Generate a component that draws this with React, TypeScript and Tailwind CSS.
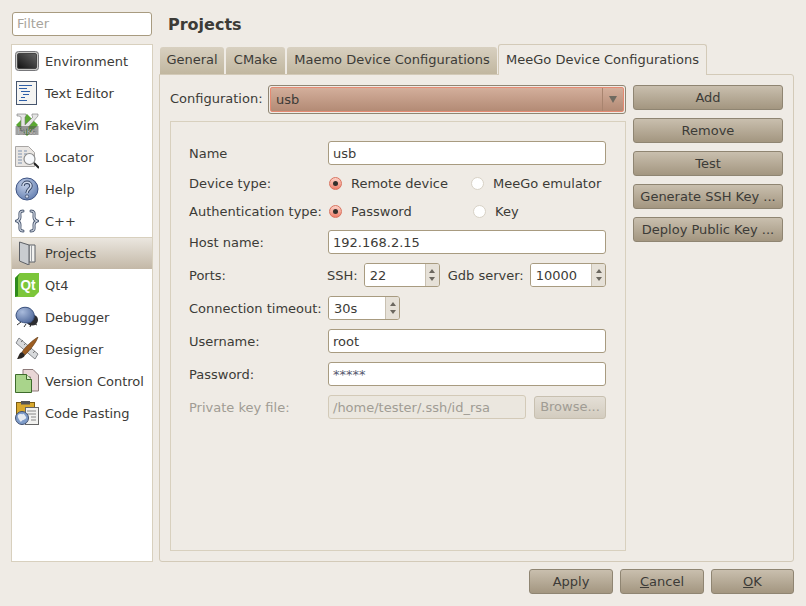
import type { ReactNode } from "react";

const EnvIcon = () => (
  <svg width="24" height="24" viewBox="0 0 24 24">
    <defs>
      <linearGradient id="envg" x1="0" y1="1" x2="1" y2="0">
        <stop offset="0" stopColor="#111" />
        <stop offset="1" stopColor="#666" />
      </linearGradient>
    </defs>
    <rect x="0.5" y="2.5" width="23" height="19" rx="3" fill="#c8c8c6" stroke="#77777a" />
    <rect x="2.5" y="4.5" width="19" height="15" rx="1.5" fill="url(#envg)" stroke="#444" />
  </svg>
);

const EditorIcon = () => (
  <svg width="24" height="24" viewBox="0 0 24 24">
    <rect x="1.5" y="0.5" width="20" height="23" fill="#f4f4f2" stroke="#47566e" />
    <path d="M4 4.5h13M4 7.5h8M6 10.500h9M8 13.500h6M6 16.500h4M4 19.500h8" stroke="#2f5fa8" strokeWidth="1" />
  </svg>
);

const FakeVimIcon = () => (
  <svg width="24" height="24" viewBox="0 0 24 24">
    <path d="M12 1 23 12 12 23 1 12Z" fill="#5aa832" />
    <path d="M2 1h9v2l-1 1v8l8-8-1-1V1h6v2L10 18H6V4L4 3H2Z" fill="#e4e4e4" stroke="#777" strokeWidth="0.6" />
    <rect x="0.5" y="13" width="23" height="9" fill="#555" opacity="0.55" />
    <text x="12" y="21" textAnchor="middle" fontFamily="'DejaVu Sans', sans-serif" fontSize="8.5" fill="#fff" stroke="#333" strokeWidth="0.25">Fake</text>
  </svg>
);

const LocatorIcon = () => (
  <svg width="24" height="24" viewBox="0 0 24 24">
    <path d="M0.5 1.5h13l6 6v14H0.5Z" fill="#e9e6e3" stroke="#a9a6a4" />
    <path d="M3 6h4M9 6h3M3 9h4M9 9h3M3 12h4M3 15h4M3 18h4" stroke="#7f93b0" strokeWidth="1" />
    <path d="M19 18l5 5" stroke="#222" strokeWidth="2" />
    <circle cx="14.5" cy="14" r="5.5" fill="#f6f8fb" stroke="#8b8b8b" strokeWidth="1.2" />
  </svg>
);

const HelpIcon = () => (
  <svg width="24" height="24" viewBox="0 0 24 24">
    <defs>
      <radialGradient id="helpg" cx="0.4" cy="0.3" r="0.8">
        <stop offset="0" stopColor="#c3d0e8" />
        <stop offset="1" stopColor="#5d79ad" />
      </radialGradient>
    </defs>
    <circle cx="12" cy="12" r="11" fill="url(#helpg)" stroke="#3f5484" />
    <path d="M8 9c0-5 8-5 8 0 0 3-4 3-4 7" fill="none" stroke="#31415f" strokeWidth="3.4" />
    <path d="M8 9c0-5 8-5 8 0 0 3-4 3-4 7" fill="none" stroke="#cfd9ec" strokeWidth="1.6" />
    <circle cx="12" cy="19.5" r="1.7" fill="#cfd9ec" stroke="#31415f" strokeWidth="0.7" />
  </svg>
);

const CppIcon = () => (
  <svg width="24" height="24" viewBox="0 0 24 24">
    <g fill="none" strokeLinecap="round">
      <path d="M8 2C4 2 5 5 5 8s-3 4-3 4 3 1 3 4-1 6 3 6" stroke="#4a5870" strokeWidth="3" />
      <path d="M16 2c4 0 3 3 3 6s3 4 3 4-3 1-3 4 1 6-3 6" stroke="#4a5870" strokeWidth="3" />
      <path d="M8 2C4 2 5 5 5 8s-3 4-3 4 3 1 3 4-1 6 3 6" stroke="#d5dbe6" strokeWidth="1.2" />
      <path d="M16 2c4 0 3 3 3 6s3 4 3 4-3 1-3 4 1 6-3 6" stroke="#d5dbe6" strokeWidth="1.2" />
    </g>
  </svg>
);

const ProjectsIcon = () => (
  <svg width="24" height="24" viewBox="0 0 24 24">
    <path d="M14 4h6v17h-6Z" fill="#f2f2f0" stroke="#5d6066" />
    <path d="M16.500 4v17" stroke="#9a9da2" />
    <path d="M4.500 1 14 4v20l-9.500-4Z" fill="#c9ccd0" stroke="#5d6066" />
  </svg>
);

const QtIcon = () => (
  <svg width="24" height="24" viewBox="0 0 24 24">
    <path d="M5 0h19v19l-5 5H0V5Z" fill="#7cc63a" />
    <path d="M5 0 0 5v19l3-1V4Z" fill="#2f8a1c" />
    <text x="13" y="17" textAnchor="middle" fontFamily="'Liberation Sans', sans-serif" fontSize="15" fontWeight="700" fill="#fff" textLength="15" lengthAdjust="spacingAndGlyphs">Qt</text>
  </svg>
);

const DebuggerIcon = () => (
  <svg width="24" height="24" viewBox="0 0 24 24">
    <defs>
      <radialGradient id="bugg" cx="0.35" cy="0.3" r="0.8">
        <stop offset="0" stopColor="#a9bbdc" />
        <stop offset="1" stopColor="#4d6699" />
      </radialGradient>
    </defs>
    <path d="M2 20l4-3M9 22l2-3M15 22l1-3M22 20l-4-2" stroke="#333" />
    <ellipse cx="17" cy="15" rx="6" ry="5.5" fill="#2c2c30" />
    <path d="M1 10C2 3 9 1 14 3c4 2 6 6 5 10-1 3-3 5-6 5C7 18 1 16 1 10Z" fill="url(#bugg)" stroke="#39507c" />
  </svg>
);

const DesignerIcon = () => (
  <svg width="24" height="24" viewBox="0 0 24 24">
    <path d="M4 1 23 17l-3 5L1 6Z" fill="#d8dadc" stroke="#85888c" />
    <path d="M6 5l2-2M9 8l2-2M12 11l2-2M15 13l2-2M18 16l2-2" stroke="#777" />
    <path d="M23 0C18 3 11 9 7 15l3 3C15 13 21 6 23 0Z" fill="#9c5d22" stroke="#5d3610" strokeWidth="0.6" />
    <path d="M7 15c-3 1-3 4-5 7 3 0 7-1 8-4Z" fill="#2b2623" />
  </svg>
);

const VersionIcon = () => (
  <svg width="24" height="24" viewBox="0 0 24 24">
    <path d="M8 0.5h10l5.500 5.500v16h-8V8L8 6Z" fill="#e9d6d6" stroke="#8d7a7a" />
    <path d="M0.5 5.5h11l5 5v13h-16Z" fill="#a9d48b" stroke="#3e6b2b" />
    <path d="M11.5 5.5v5h5" fill="#d9edc8" stroke="#3e6b2b" />
  </svg>
);

const PastingIcon = () => (
  <svg width="24" height="24" viewBox="0 0 24 24">
    <rect x="1.5" y="1.5" width="18" height="16" fill="#d9a92e" stroke="#7a5c14" />
    <rect x="6" y="0" width="9" height="3.5" fill="#555" />
    <rect x="10.5" y="6.5" width="13" height="17" fill="#f2f2f0" stroke="#666" />
    <path d="M12 10h9M12 13h9M16 16h5M16 19h5" stroke="#888" />
    <circle cx="7" cy="17" r="6.5" fill="#7f9cc9" stroke="#3e4f70" />
    <path d="M3 14c2-2 4 0 5-1s2 2 3 3-2 3-3 3-2 3-3 1-3-4-2-6Z" fill="#e6eaf0" />
  </svg>
);

const pages: [string, ReactNode][] = [
  ["Environment", <EnvIcon />],
  ["Text Editor", <EditorIcon />],
  ["FakeVim", <FakeVimIcon />],
  ["Locator", <LocatorIcon />],
  ["Help", <HelpIcon />],
  ["C++", <CppIcon />],
  ["Projects", <ProjectsIcon />],
  ["Qt4", <QtIcon />],
  ["Debugger", <DebuggerIcon />],
  ["Designer", <DesignerIcon />],
  ["Version Control", <VersionIcon />],
  ["Code Pasting", <PastingIcon />],
];

const btn =
  "h-[25px] rounded-[3px] border border-[#8f8572] bg-gradient-to-b from-[#c9bfae] to-[#a39680] flex items-center justify-center whitespace-nowrap";

const field = "h-[24px] rounded-[3px] border border-[#a89b80] bg-white px-[4px] pt-[2px] flex items-center";

function Radio({ on, label, className }: { on?: boolean; label: string; className?: string }) {
  return (
    <div className={`flex items-center ${className ?? ""}`}>
      <span
        className={`w-[13px] h-[13px] rounded-full border flex items-center justify-center mr-[9px] ${
          on ? "border-[#d9735f] bg-gradient-to-b from-[#fbd2c8] to-[#ee7f6b]" : "border-[#d8d2c6] bg-white"
        }`}
      >
        {on && <span className="w-[5px] h-[5px] rounded-full bg-[#33302c]" />}
      </span>
      {label}
    </div>
  );
}

function Spin({ value, className }: { value: string; className: string }) {
  return (
    <div className={`h-[24px] rounded-[3px] border border-[#a89b80] flex overflow-hidden ${className}`}>
      <div className="flex-1 bg-white px-[5px] pt-[2px] flex items-center">{value}</div>
      <div className="w-[14px] border-l border-[#c9c1b2] bg-[#e6e1d8] flex flex-col items-center justify-between py-[5px]">
        <span className="w-0 h-0 border-x-[3px] border-x-transparent border-b-[4px] border-b-[#6b675f]" />
        <span className="w-0 h-0 border-x-[3px] border-x-transparent border-t-[4px] border-t-[#6b675f]" />
      </div>
    </div>
  );
}

function Row({ label, dim, radio, children }: { label: string; dim?: boolean; radio?: boolean; children: ReactNode }) {
  return (
    <div className={`flex items-center ${radio ? "h-[19px]" : "h-[24px]"}`}>
      <div className={`w-[139px] shrink-0 whitespace-nowrap ${radio ? "" : "mt-[2px]"} ${dim ? "text-[#a09c94]" : ""}`}>
        {label}
      </div>
      {children}
    </div>
  );
}

export default function App() {
  return (
    <div
      className="w-[806px] h-[606px] overflow-hidden bg-[#efebe5] text-[#3c3b37] text-[13px] flex flex-col"
      style={{ fontFamily: "'DejaVu Sans', sans-serif" }}
    >
      <div className="flex h-[562px] pt-[12px]">
        {/* Sidebar */}
        <div className="w-[142px] ml-[11px] shrink-0 flex flex-col">
          <div className="h-[24px] w-[140px] ml-[1px] rounded-[3px] border border-[#a89b80] bg-white px-[4px] flex items-center text-[#a8a49c]">
            Filter
          </div>
          <div className="mt-[8px] flex-1 bg-white border border-[#d8d0be]">
            {pages.map(([name, icon]) => (
              <div
                key={name}
                className={`h-[32px] flex items-center pl-[3px] whitespace-nowrap ${
                  name === "Projects" ? "bg-gradient-to-b from-[#ece8e1] to-[#c3b8a7] shadow-[inset_0_1px_0_#d8d0be]" : ""
                }`}
              >
                <span className="w-[24px] h-[24px] mr-[6px] shrink-0">{icon}</span>
                <span className="mt-[2px]">{name}</span>
              </div>
            ))}
          </div>
        </div>

        {/* Main */}
        <div className="flex-1 ml-[6px] mr-[12px] flex flex-col min-w-0">
          <div className="h-[32px] pl-[9px] pt-[1px] font-bold text-[16px] text-[#3c3b37]">Projects</div>
          <div className="flex items-end h-[30px] pl-[1px]">
            <div className="h-[27px] w-[64px] pb-[1px] rounded-t-[3px] bg-gradient-to-b from-[#d8d0c0] to-[#c1b7a0] flex items-center justify-center">General</div>
            <div className="h-[27px] w-[59px] pb-[1px] ml-[2px] rounded-t-[3px] bg-gradient-to-b from-[#d8d0c0] to-[#c1b7a0] flex items-center justify-center">CMake</div>
            <div className="h-[27px] w-[210px] pb-[1px] ml-[2px] rounded-t-[3px] bg-gradient-to-b from-[#d8d0c0] to-[#c1b7a0] flex items-center justify-center whitespace-nowrap">Maemo Device Configurations</div>
            <div className="h-[31px] w-[209px] ml-[1px] pb-[1px] -mb-[1px] relative z-10 rounded-t-[3px] border border-b-0 border-[#d3cab8] bg-[#efebe5] flex items-center justify-center whitespace-nowrap">MeeGo Device Configurations</div>
          </div>
          <div className="flex-1 rounded-b-[3px] rounded-tr-[3px] border border-[#d3cab8] pl-[10px] pr-[10px] pt-[10px] flex">
            <div className="w-[456px] shrink-0 flex flex-col">
              <div className="flex items-center h-[29px] mb-[7px]">
                <div className="w-[98px] shrink-0 whitespace-nowrap pb-[2px]">Configuration:</div>
                <div className="w-[358px] h-[29px] rounded-[3px] border border-[#8f8572] p-px">
                  <div className="h-full rounded-[2px] border border-[#e58a73] bg-gradient-to-b from-[#d3ae9b] to-[#b38b75] flex items-center pl-[5px]">
                    <span className="flex-1">usb</span>
                    <span className="w-[21px] h-full border-l border-[#a8846f] flex items-center justify-center">
                      <span className="w-0 h-0 border-x-[4px] border-x-transparent border-t-[7px] border-t-[#6f6a60]" />
                    </span>
                  </div>
                </div>
              </div>
              <div className="mb-[10px] flex-1 border border-[#d8d0be] pl-[18px] pt-[19px] pr-[19px] flex flex-col gap-[9px]">
                <Row label="Name">
                  <div className={`${field} flex-1`}>usb</div>
                </Row>
                <Row label="Device type:" radio>
                  <Radio on label="Remote device" className="ml-[1px] w-[142px]" />
                  <Radio label="MeeGo emulator" />
                </Row>
                <Row label="Authentication type:" radio>
                  <Radio on label="Password" className="ml-[1px] w-[144px]" />
                  <Radio label="Key" />
                </Row>
                <Row label="Host name:">
                  <div className={`${field} flex-1`}>192.168.2.15</div>
                </Row>
                <Row label="Ports:">
                  <span className="-ml-px mr-[6px] mt-[2px]">SSH:</span>
                  <Spin value="22" className="w-[76px]" />
                  <span className="ml-[8px] mr-[6px] mt-[2px] whitespace-nowrap">Gdb server:</span>
                  <Spin value="10000" className="flex-1" />
                </Row>
                <Row label="Connection timeout:">
                  <Spin value="30s" className="w-[72px]" />
                </Row>
                <Row label="Username:">
                  <div className={`${field} flex-1`}>root</div>
                </Row>
                <Row label="Password:">
                  <div className={`${field} flex-1 text-[#55586e]`}>*****</div>
                </Row>
                <Row label="Private key file:" dim>
                  <div className="h-[24px] w-[198px] rounded-[3px] border border-[#d3cab8] bg-[#ebe7df] px-[4px] pt-[2px] flex items-center text-[#a09c94]">
                    /home/tester/.ssh/id_rsa
                  </div>
                  <div className="ml-[8px] flex-1 h-[23px] rounded-[3px] border border-[#c8c0b0] bg-gradient-to-b from-[#e4dfd6] to-[#d3ccbf] text-[#a09c94] flex items-center justify-center">
                    Browse...
                  </div>
                </Row>
              </div>
            </div>
            <div className="ml-[7px] w-[150px] flex flex-col gap-[8px]">
              {["Add", "Remove", "Test", "Generate SSH Key ...", "Deploy Public Key ..."].map((t) => (
                <div key={t} className={btn}>
                  {t}
                </div>
              ))}
            </div>
          </div>
        </div>
      </div>

      {/* Dialog buttons */}
      <div className="flex justify-end gap-[7px] pr-[12px] pt-[7px]">
        <div className={`${btn} w-[84px]`}>Apply</div>
        <div className={`${btn} w-[84px]`}>
          <span><span className="underline">C</span>ancel</span>
        </div>
        <div className={`${btn} w-[83px]`}>
          <span><span className="underline">O</span>K</span>
        </div>
      </div>
    </div>
  );
}
